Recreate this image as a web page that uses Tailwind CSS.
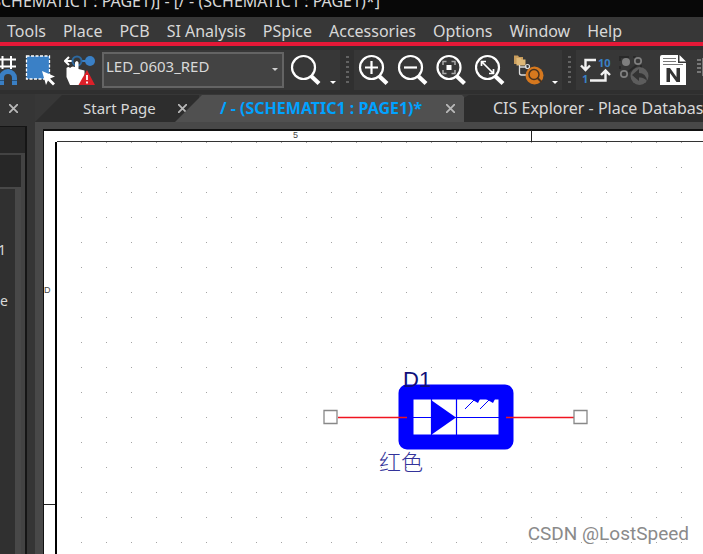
<!DOCTYPE html>
<html lang="en">
<head>
  <meta charset="UTF-8">
  <meta name="viewport" content="width=device-width, initial-scale=1.0">
  <script src="https://cdn.jsdelivr.net/npm/@tailwindcss/browser@4"></script>
  <title>Capture - SCHEMATIC1 : PAGE1</title>
</head>
<body class="flex h-screen flex-col overflow-hidden bg-[#353535] font-['Noto_Sans','Noto_Sans_CJK_SC',sans-serif] text-[16px] leading-5 text-[#d8d8d8]">
  <header class="shrink-0 bg-[#080808]">
    <div class="flex h-[17px] w-[380px] items-end justify-end pb-[6px] whitespace-nowrap">(SCHEMATIC1 : PAGE1)] - [/ - (SCHEMATIC1 : PAGE1)*]</div>
    <nav class="flex h-[25px] items-center gap-[17px] bg-[#373737] pt-0.5 pl-[7px] whitespace-nowrap">
      <a href="#">Tools</a>
      <a href="#">Place</a>
      <a href="#">PCB</a>
      <a href="#">SI Analysis</a>
      <a href="#">PSpice</a>
      <a href="#">Accessories</a>
      <a href="#">Options</a>
      <a href="#">Window</a>
      <a href="#">Help</a>
    </nav>
    <div class="h-1 bg-[#e31837]"></div>
  </header>

  <!-- toolbar -->
  <div class="flex h-12 shrink-0 items-center overflow-hidden border-t-4 border-b-4 border-[#2f2f2f] bg-[#373737]">
    <button type="button" aria-label="Snap to grid" class="w-[18px] shrink-0">
      <svg class="h-8 w-[18px]" viewBox="0 0 18 32" fill="none">
        <path d="M0 5.500H16M0 12.500H16M2.500 2V15M11 2V15" stroke="#fff" stroke-width="2"/>
        <path d="M1.500 31V24a6.500 6.500 0 0 1 13 0v7" stroke="#3a7fc4" stroke-width="5"/>
        <path d="M0 26.500h4M12 26.500h5" stroke="#24527f" stroke-width="1"/>
      </svg>
    </button>
    <button type="button" aria-label="Area select" class="ml-[7px] w-8 shrink-0">
      <svg class="size-8" viewBox="0 0 32 32">
        <rect x="1.500" y="2" width="23" height="23" fill="#3a80c6" stroke="#fff" stroke-width="1.300" stroke-dasharray="3 1.500"/>
        <path d="M17 17 30 22.500 25 24.500 30 29.500 28 31.500 23 26.500 21 31Z" fill="#fff"/>
      </svg>
    </button>
    <button type="button" aria-label="Drag connected object" class="ml-[7px] w-8 shrink-0">
      <svg class="size-8" viewBox="0 0 32 32">
        <path d="M1 7H9M5 3 1 7 5 11" fill="none" stroke="#fff" stroke-width="2"/>
        <path d="M17 7h7" stroke="#3a80c6" stroke-width="2"/>
        <circle cx="13" cy="7" r="4.500" fill="none" stroke="#2d689f" stroke-width="2"/>
        <circle cx="26" cy="7" r="5" fill="#3a80c6"/>
        <path d="M11 8.500Q13 5.500 14.500 8.500V15l6 1.500V21l-3 10H6L2.500 23V14q2-2 3.500 0 2-2.500 5-1Z" fill="#fff"/>
        <path d="M23 16 31 31H14.500Z" fill="#db2029"/>
        <path d="M23 21v5M23 27.500v2" stroke="#fff" stroke-width="1.800"/>
      </svg>
    </button>
    <div class="relative ml-1.5 w-[182px] shrink-0">
      <select aria-label="Part" class="h-9 w-full appearance-none border-2 border-[#646464] bg-[#434343] pb-2 pl-0.5 text-[15px] leading-5 text-[#d8d8d8]">
        <option>LED_0603_RED</option>
      </select>
      <svg class="pointer-events-none absolute top-4 right-1.5 h-[3px] w-1.5" viewBox="0 0 6 3"><path d="M0 0h6L3 3Z" fill="#cfcfcf"/></svg>
    </div>
    <button type="button" aria-label="Find" class="ml-1.5 w-8 shrink-0">
      <svg class="size-8" viewBox="0 0 32 32" fill="none" stroke="#fff">
        <circle cx="13.500" cy="13.500" r="11.500" stroke-width="2.200"/>
        <path d="m21 22 8 7.500" stroke-width="4.200"/>
      </svg>
    </button>
    <svg class="mt-6 ml-2 h-[3px] w-1.5 shrink-0" viewBox="0 0 6 3"><path d="M0 0h6L3 3Z" fill="#fff"/></svg>
    <div class="ml-1 flex h-full w-[14px] shrink-0 items-center justify-center bg-[#303030]">
      <svg class="h-7 w-[3px]" viewBox="0 0 3 28"><path d="M1.500 0v28" stroke="#626262" stroke-width="3" stroke-dasharray="2 3"/></svg>
    </div>
    <div class="ml-1 flex shrink-0 gap-[7px]">
      <button type="button" aria-label="Zoom in">
        <svg class="size-8" viewBox="0 0 32 32" fill="none" stroke="#fff">
          <circle cx="13.500" cy="13.500" r="11.500" stroke-width="2.200"/>
          <path d="m21 22 8 7.500" stroke-width="4.200"/>
          <path d="M7 13.500h13M13.500 7v13" stroke-width="2.200"/>
        </svg>
      </button>
      <button type="button" aria-label="Zoom out">
        <svg class="size-8" viewBox="0 0 32 32" fill="none" stroke="#fff">
          <circle cx="13.500" cy="13.500" r="11.500" stroke-width="2.200"/>
          <path d="m21 22 8 7.500" stroke-width="4.200"/>
          <path d="M7 13.500h13" stroke-width="2.200"/>
        </svg>
      </button>
      <button type="button" aria-label="Zoom to all">
        <svg class="size-8" viewBox="0 0 32 32" fill="none" stroke="#fff">
          <circle cx="13" cy="13.500" r="11.500" stroke-width="2.200"/>
          <path d="m20.500 22 8 7.500" stroke-width="4.200"/>
          <path d="M7 11V7.500H10.500M15.500 7.500H19V11M19 16v3.500H15.500M10.500 19.500H7V16" stroke="#aaa" stroke-width="1.500"/>
          <rect x="10.500" y="11" width="5" height="5" fill="#fff" stroke="none"/>
        </svg>
      </button>
      <button type="button" aria-label="Zoom area">
        <svg class="size-8" viewBox="0 0 32 32" fill="none" stroke="#fff">
          <circle cx="12.500" cy="13.500" r="11.500" stroke-width="2.200"/>
          <path d="m20 22 8 7.500" stroke-width="4.200"/>
          <path d="m7 8 11 11M6.500 12V7.500H11M18.500 15v4.500H14" stroke-width="1.700"/>
        </svg>
      </button>
      <button type="button" aria-label="Search hierarchy">
        <svg class="size-8" viewBox="0 0 32 32" fill="none">
          <path d="M0 1.500h4l1 1.500h4v7H0Z" fill="#c99d5c"/>
          <path d="M2.500 4h4l1 1.500h4v6h-9Z" fill="#dfb877"/>
          <path d="M5.500 11v8q0 2 2 2H12M5.500 13h7" stroke="#ddd" stroke-width="1.300"/>
          <circle cx="13.500" cy="12.500" r="2" stroke="#ddd" stroke-width="1.200"/>
          <circle cx="20.500" cy="21.500" r="9" fill="#d6781e"/>
          <circle cx="20" cy="20.500" r="5" stroke="#49331f" stroke-width="1.500"/>
          <path d="m23.500 24 4 4" stroke="#49331f" stroke-width="2"/>
        </svg>
      </button>
    </div>
    <svg class="mt-6 ml-1.5 h-[3px] w-1.5 shrink-0" viewBox="0 0 6 3"><path d="M0 0h6L3 3Z" fill="#fff"/></svg>
    <div class="ml-1 flex h-full w-[14px] shrink-0 items-center justify-center bg-[#303030]">
      <svg class="h-7 w-[3px]" viewBox="0 0 3 28"><path d="M1.500 0v28" stroke="#626262" stroke-width="3" stroke-dasharray="2 3"/></svg>
    </div>
    <div class="ml-1 flex shrink-0 gap-[7px]">
      <button type="button" aria-label="Annotate">
        <svg class="size-8" viewBox="0 0 32 32" fill="none">
          <path d="M16 6H5.500V15M1 11.500l4.500 4.500L10 11.500M10 26.500H25.500V18M21 21l4.500-4.500 4.500 4.500" stroke="#f2f2f2" stroke-width="2.400"/>
          <text x="18" y="13" class="font-['Open_Sans',sans-serif] text-[11px] font-bold" fill="#3a80c6">10</text>
          <text x="2" y="29" class="font-['Open_Sans',sans-serif] text-[11px] font-bold" fill="#3a80c6">1</text>
        </svg>
      </button>
      <button type="button" aria-label="Back annotate" disabled>
        <svg class="size-8" viewBox="0 0 32 32" fill="none">
          <path d="M1 7V3h9M14 3h3M1 12v3M18 11 9 18M22 14v-3" stroke="#292929" stroke-width="2"/>
          <circle cx="7" cy="8" r="4" fill="#7f7f7f"/>
          <circle cx="19" cy="7" r="3.200" stroke="#7f7f7f" stroke-width="1.700"/>
          <circle cx="5" cy="20" r="3.200" stroke="#7f7f7f" stroke-width="1.700"/>
          <circle cx="20.500" cy="22" r="9" fill="#5d5d5d"/>
          <path d="m13 21 7-6v4q7 0 8 8-3-4-8-3.500V27Z" fill="#333"/>
        </svg>
      </button>
      <button type="button" aria-label="Netlist">
        <svg class="size-8" viewBox="0 0 32 32">
          <path d="M4 1H20V9h8V31H2V3Q2 1 4 1ZM21.500 1 28 7.500H21.500Z" fill="#fff"/>
          <path d="M5 4.500h13M5 7.500h13M5 10.500h20" stroke="#777" stroke-width="1"/>
          <path d="M8.500 28V14h3.500l6.500 9v-9H22v14h-3.500L12 19v9Z" fill="#333"/>
        </svg>
      </button>
      <button type="button" aria-label="Cross reference">
        <svg class="size-8" viewBox="0 0 32 32"><path d="M0 6h4M0 10h4M0 14h4M0 18h4M6 5h12v16H6Z" stroke="#777" stroke-width="2" fill="#777"/></svg>
      </button>
    </div>
  </div>

  <div class="flex min-h-0 grow">
    <!-- docked panel -->
    <aside class="flex w-[35px] shrink-0 flex-col">
      <div class="flex h-7 items-center pl-[7px]">
        <button type="button" aria-label="Close panel" class="p-0.5">
          <svg class="size-[9px]" viewBox="0 0 9 9"><path d="m0 0 9 9M9 0 0 9" stroke="#b9b9b9" stroke-width="1.800"/></svg>
        </button>
      </div>
      <div class="mt-1 mr-2 flex grow flex-col border-t border-r-2 border-[#151515] bg-[#272727]">
        <div class="h-[26px]"></div>
        <div class="flex grow flex-col border-t-2 border-r-4 border-[#434343]">
          <div class="h-8"></div>
          <div class="grow border-t-2 border-r-[6px] border-[#484848] bg-[#303030]">
            <div class="flex w-[15px] flex-col items-end pt-[51px] text-[14px]">
              <span class="pr-[9px]">1</span>
              <span class="mt-[31px] pr-[7px]">e</span>
            </div>
          </div>
        </div>
      </div>
    </aside>

    <main class="flex min-w-0 grow flex-col bg-[#484848]">
      <!-- document tabs -->
      <div class="flex h-7 shrink-0 items-stretch overflow-hidden bg-[#373737] whitespace-nowrap" role="tablist">
        <div class="-mr-6 flex w-[164px] shrink-0 items-center bg-[#2d2d2d] pl-12 [clip-path:polygon(0_100%,27px_4%,100%_4%,100%_100%)]">
          <button type="button" role="tab" aria-selected="false" class="text-[15px]">Start Page</button>
          <button type="button" aria-label="Close Start Page" class="ml-[22px] shrink-0"><svg class="size-[9px]" viewBox="0 0 9 9"><path d="m0 0 9 9M9 0 0 9" stroke="#b9b9b9" stroke-width="1.800"/></svg></button>
        </div>
        <div class="z-10 flex w-[289px] shrink-0 items-center justify-between bg-[#505050] pr-[9px] pl-[45px] [clip-path:polygon(0_100%,27px_4%,287px_4%,100%_11%,100%_100%)]">
          <button type="button" role="tab" aria-selected="true" class="font-bold text-[#00a2ff]">/ - (SCHEMATIC1 : PAGE1)*</button>
          <button type="button" aria-label="Close PAGE1" class="shrink-0"><svg class="size-[9px]" viewBox="0 0 9 9"><path d="m0 0 9 9M9 0 0 9" stroke="#b9b9b9" stroke-width="1.800"/></svg></button>
        </div>
        <div class="flex grow items-center bg-[#2d2d2d] pl-[29px] [clip-path:polygon(0_14%,5px_4%,100%_4%,100%_100%,0_100%)]">
          <button type="button" role="tab" aria-selected="false">CIS Explorer - Place Database</button>
        </div>
      </div>

      <!-- schematic page; grid pitch is 25 units -->
      <div class="relative mt-[7px] ml-2 grow overflow-hidden bg-white">
        <svg class="absolute inset-0 h-full w-full" role="img" aria-label="Schematic page">
          <defs>
            <pattern id="grid" x="38" y="13" width="25" height="25" patternUnits="userSpaceOnUse">
              <rect width="1" height="1" fill="#a4a4a4"/>
            </pattern>
          </defs>
          <rect x="16" y="12" width="100%" height="100%" fill="url(#grid)"/>
          <path d="M0 2000V1H3000" fill="none" stroke="#111" stroke-width="2"/>
          <path d="M14 12.500H3000" stroke="#333" stroke-width="1"/>
          <path d="M13 2000V13" stroke="#000" stroke-width="2"/>
          <path d="M488.500 1v12M1 375.500h11" stroke="#222"/>
          <text x="250" y="9" class="font-['Liberation_Sans',sans-serif] text-[9px]" fill="#444">5</text>
          <text x="1" y="164" class="font-['Liberation_Sans',sans-serif] text-[9px]" fill="#444">D</text>

          <!-- LED D1 -->
          <rect x="363" y="263" width="100" height="50" rx="1" fill="#fff" stroke="#00f" stroke-width="15" stroke-linejoin="round"/>
          <path d="M370 288.500h86M388.500 270v36M413.500 270v36" stroke="#00f" stroke-width="1.200"/>
          <path d="M388 271 413 288.500 388 306Z" fill="#00f"/>
          <path d="m422 280 10-10m5 10 10-10" stroke="#00f"/>
          <path d="M428 270h9l-2 4Zm15 0h9l-2 4Z" fill="#00f"/>
          <path d="M295 288.500h69M463 288.500h69" stroke="#f01420" stroke-width="1.300"/>
          <path d="M281 281.500h13v13H281ZM531 281.500h13v13H531Z" fill="#fff" stroke="#888" stroke-width="1.300"/>
          <text x="360" y="258" class="font-['Liberation_Sans',sans-serif] text-[22px]" fill="#10107a">D1</text>
          <text x="336" y="341" class="font-['Noto_Sans_CJK_SC',sans-serif] text-[22px] font-light" fill="#33339a">红色</text>
        </svg>
        <p class="absolute right-[14px] bottom-2 font-['Roboto',sans-serif] text-[19px] leading-6 text-[#8a8a8a]">CSDN @LostSpeed</p>
      </div>
    </main>
  </div>
</body>
</html>
